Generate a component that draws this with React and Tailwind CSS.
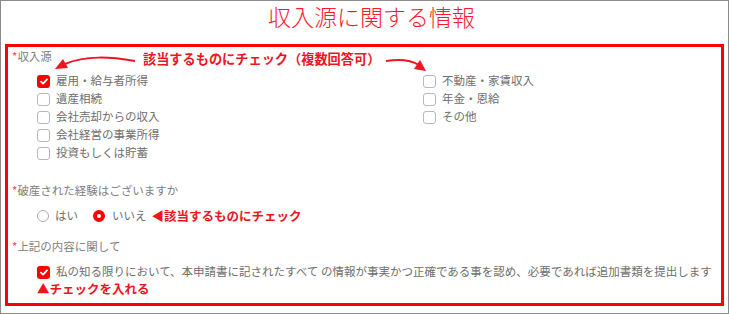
import React from "react";

const FONT = { fontFamily: '"Noto Sans CJK JP", "Noto Sans", sans-serif' };

function Check({ checked }) {
  if (checked) {
    return (
      <span className="w-[13px] h-[13px] rounded-[3px] bg-[#ff0000] flex items-center justify-center shrink-0">
        <svg width="8" height="7" viewBox="0 0 8 7">
          <path d="M1 3.6 L3.1 5.6 L7 1.4" fill="none" stroke="#fff" strokeWidth="1.8" strokeLinecap="round" strokeLinejoin="round" />
        </svg>
      </span>
    );
  }
  return <span className="w-[13px] h-[13px] rounded-[3px] border border-[#b3b9bf] bg-white shrink-0" />;
}

function Opt({ checked, label }) {
  return (
    <div className="h-[18px] flex items-center gap-[6px]">
      <Check checked={checked} />
      <span className="text-[11.5px] text-[#6e6e6e] leading-none">{label}</span>
    </div>
  );
}

function Label({ children }) {
  return (
    <div className="h-[18px] flex items-center pl-[4px] text-[11.5px] text-[#808080] leading-none">
      <span className="text-[#ff4040]">*</span>
      {children}
    </div>
  );
}

export default function App() {
  return (
    <div className="w-[729px] h-[314px] border border-[#8c8c8c] bg-white relative overflow-hidden" style={FONT}>
      <div className="h-[44px] pl-[14px] text-center">
        <div className="-mt-[1px] text-[23px] leading-[32px] font-light text-[#ff1a2e]">収入源に関する情報</div>
      </div>
      <div className="ml-[4px] w-[719px] h-[262px] border-[3px] border-[#ff0000] pt-[1px]">
        <Label>収入源</Label>
        <div className="mt-[6px] pl-[29px] grid grid-cols-[386px_1fr]">
          <div className="flex flex-col">
            <Opt checked label="雇用・給与者所得" />
            <Opt label="遺産相続" />
            <Opt label="会社売却からの収入" />
            <Opt label="会社経営の事業所得" />
            <Opt label="投資もしくは貯蓄" />
          </div>
          <div className="flex flex-col">
            <Opt label="不動産・家賃収入" />
            <Opt label="年金・恩給" />
            <Opt label="その他" />
          </div>
        </div>
        <div className="mt-[20px]">
          <Label>破産された経験はございますか</Label>
        </div>
        <div className="mt-[7px] h-[18px] pl-[29px] flex items-center">
          <span className="w-[12px] h-[12px] rounded-full border border-[#b0b0b0] bg-white shrink-0" />
          <span className="ml-[6px] text-[11.5px] text-[#6e6e6e] leading-none">はい</span>
          <span className="ml-[15px] w-[12px] h-[12px] rounded-full border-[4px] border-[#ff0000] bg-white shrink-0" />
          <span className="ml-[7px] text-[11.5px] text-[#6e6e6e] leading-none">いいえ</span>
          <span className="ml-[5px] text-[12.5px] font-bold text-[#f0141e] leading-none">◀該当するものにチェック</span>
        </div>
        <div className="mt-[13px]">
          <Label>上記の内容に関して</Label>
        </div>
        <div className="mt-[7px] pl-[29px]">
          <div className="h-[18px] flex items-center gap-[6px]">
            <Check checked />
            <span className="text-[11.5px] text-[#6e6e6e] leading-none whitespace-nowrap">
              私の知る限りにおいて、本申請書に記されたすべて の情報が事実かつ正確である事を認め、必要であれば追加書類を提出します
            </span>
          </div>
          <div className="h-[16px] flex items-center text-[12.5px] font-bold text-[#f0141e] leading-none">
            ▲チェックを入れる
          </div>
        </div>
      </div>

      <div className="absolute left-[142px] top-[49px] text-[13.2px] font-bold text-[#f0141e] leading-[18px] whitespace-nowrap">
        該当するものにチェック（複数回答可）
      </div>
      <svg className="absolute left-0 top-0" width="729" height="314" viewBox="0 0 729 314" style={{ pointerEvents: "none" }}>
        <path d="M134 60 C 110 56, 85 54, 64 63" fill="none" stroke="#f0141e" strokeWidth="2" />
        <path d="M54 68 L62 58 L67 67 Z" fill="#f0141e" />
        <path d="M385 60 C 398 58, 410 59, 418 64" fill="none" stroke="#f0141e" strokeWidth="2" />
        <path d="M425 70 L413 68 L419 59 Z" fill="#f0141e" />
      </svg>
    </div>
  );
}
